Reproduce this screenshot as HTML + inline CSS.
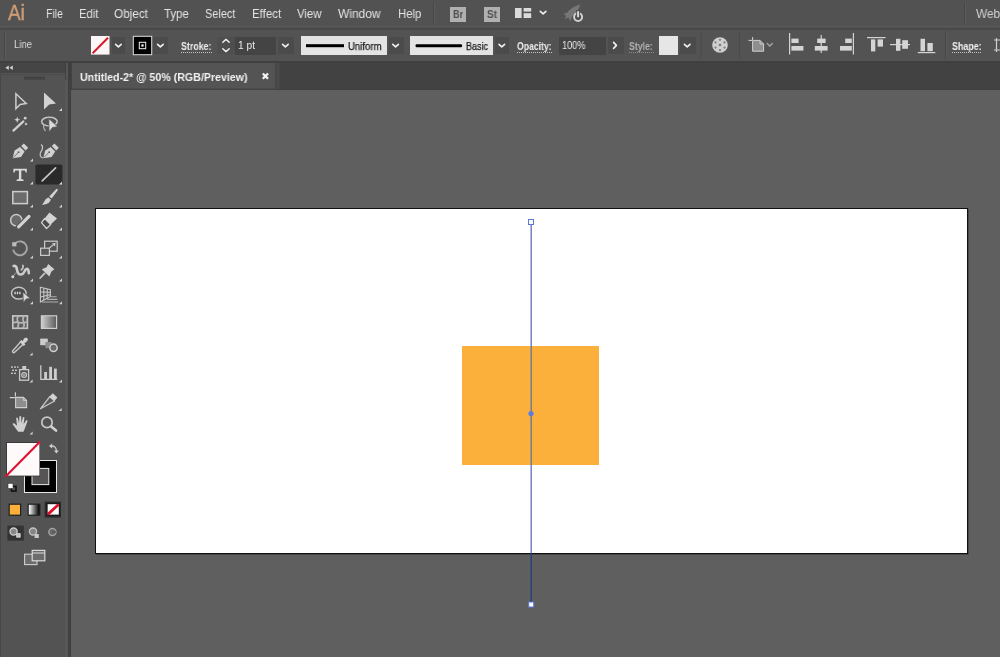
<!DOCTYPE html>
<html>
<head>
<meta charset="utf-8">
<title>Untitled-2* @ 50% (RGB/Preview)</title>
<style>
html,body{margin:0;padding:0;}
body{width:1000px;height:657px;overflow:hidden;background:#5f5f5f;font-family:"Liberation Sans",sans-serif;font-size:12px;color:#e6e6e6;position:relative;}
.abs{position:absolute;}
.tx{position:absolute;white-space:nowrap;transform-origin:0 0;will-change:transform;}
#menubar{left:0;top:0;width:1000px;height:28px;background:#525252;}
#sep1{left:0;top:28px;width:1000px;height:2px;background:#494949;}
#sep1b{left:0;top:26px;width:1000px;height:1px;background:#585858;}
#ctrlbar{left:0;top:30px;width:1000px;height:31px;background:#535353;}
#sep2{left:0;top:61px;width:1000px;height:2px;background:#404040;}
#tabbar{left:71px;top:63px;width:929px;height:27px;background:#424242;}
#tab{left:72px;top:63px;width:203px;height:26px;background:#545454;}
#toolhead{left:0;top:63px;width:65px;height:10px;background:#454545;}
#toolbar{left:0;top:73px;width:68px;height:584px;background:#535353;}
#toolborder{left:68px;top:63px;width:3px;height:594px;background:#3e3e3e;}
#toolborder4{left:65px;top:80px;width:3px;height:577px;background:#585858;}
#toolborder5{left:69px;top:80px;width:1px;height:577px;background:#454545;}
#toolborder2{left:65px;top:63px;width:1px;height:17px;background:#404040;}
#toolborder3{left:66px;top:63px;width:2px;height:17px;background:#555555;}
#canvas{left:71px;top:90px;width:929px;height:567px;background:#5f5f5f;}
.field{top:37px;height:18px;background:#444444;}
.lightbox{top:36px;height:19px;background:#e4e4e4;}
.chev{top:37px;height:17px;background:#4b4b4b;}
svg{position:absolute;left:0;top:0;}
</style>
</head>
<body>
<div id="menubar" class="abs"></div>
<div id="sep1" class="abs"></div>
<div id="sep1b" class="abs"></div>
<div id="ctrlbar" class="abs"></div>
<div id="sep2" class="abs"></div>
<div id="tabbar" class="abs"></div>
<div id="tab" class="abs"></div>
<div id="toolhead" class="abs"></div>
<div id="toolbar" class="abs"></div>
<div id="toolborder" class="abs"></div>
<div id="toolborder2" class="abs"></div>
<div id="toolborder3" class="abs"></div>
<div id="toolborder4" class="abs"></div>
<div id="toolborder5" class="abs"></div>
<div id="canvas" class="abs"></div>
<!-- menu icon boxes -->
<div class="abs" style="left:449.5px;top:6.5px;width:16px;height:15.5px;background:#b0b0b0;"></div>
<div class="abs" style="left:483.6px;top:6.5px;width:16.3px;height:15.5px;background:#b0b0b0;"></div>
<!-- control bar boxes -->
<div class="abs chev" style="left:112px;width:13px;"></div>
<div class="abs chev" style="left:153px;width:15px;"></div>
<div class="abs chev" style="left:217px;width:18px;background:#4e4e4e;"></div>
<div class="abs field" style="left:235px;width:41px;"></div>
<div class="abs chev" style="left:278px;width:16px;"></div>
<div class="abs lightbox" style="left:301px;width:86px;"></div>
<div class="abs chev" style="left:389px;width:15px;"></div>
<div class="abs lightbox" style="left:410px;width:83px;"></div>
<div class="abs chev" style="left:495px;width:14px;"></div>
<div class="abs field" style="left:559px;width:47px;"></div>
<div class="abs chev" style="left:608px;width:16px;"></div>
<div class="abs lightbox" style="left:659px;width:19px;background:#e6e6e6;"></div>
<div class="abs chev" style="left:680px;width:16px;"></div>
<!-- artboard -->
<div class="abs" style="left:96px;top:209px;width:873px;height:346px;background:#474747;"></div>
<div class="abs" style="left:95px;top:208px;width:871px;height:344px;background:#ffffff;border:1px solid #101010;"></div>
<div class="abs" style="left:462px;top:346px;width:137px;height:119px;background:#fbb03b;"></div>

<!-- TEXT -->
<div class="tx" style="left:7.6px;top:-0.25px;font-size:21.5px;line-height:26px;font-weight:normal;color:#d19f78;transform:scaleX(0.8837);-webkit-text-stroke:0.35px #d19f78;">Ai</div>
<div class="tx" style="left:45.6px;top:6.50px;font-size:12.4px;line-height:15px;font-weight:normal;color:#e4e4e4;transform:scaleX(0.8513);">File</div>
<div class="tx" style="left:78.8px;top:6.50px;font-size:12.4px;line-height:15px;font-weight:normal;color:#e4e4e4;transform:scaleX(0.9083);">Edit</div>
<div class="tx" style="left:114.2px;top:6.50px;font-size:12.4px;line-height:15px;font-weight:normal;color:#e4e4e4;transform:scaleX(0.9494);">Object</div>
<div class="tx" style="left:163.8px;top:6.50px;font-size:12.4px;line-height:15px;font-weight:normal;color:#e4e4e4;transform:scaleX(0.9228);">Type</div>
<div class="tx" style="left:205.4px;top:6.50px;font-size:12.4px;line-height:15px;font-weight:normal;color:#e4e4e4;transform:scaleX(0.8828);">Select</div>
<div class="tx" style="left:252.2px;top:6.50px;font-size:12.4px;line-height:15px;font-weight:normal;color:#e4e4e4;transform:scaleX(0.9279);">Effect</div>
<div class="tx" style="left:296.8px;top:6.50px;font-size:12.4px;line-height:15px;font-weight:normal;color:#e4e4e4;transform:scaleX(0.9159);">View</div>
<div class="tx" style="left:338.2px;top:6.50px;font-size:12.4px;line-height:15px;font-weight:normal;color:#e4e4e4;transform:scaleX(0.9665);">Window</div>
<div class="tx" style="left:397.8px;top:6.50px;font-size:12.4px;line-height:15px;font-weight:normal;color:#e4e4e4;transform:scaleX(0.9182);">Help</div>
<div class="tx" style="left:976.4px;top:6.50px;font-size:12.4px;line-height:15px;font-weight:normal;color:#d2d2d2;transform:scaleX(0.9578);">Web</div>
<div class="tx" style="left:452.6px;top:8.06px;font-size:10.5px;line-height:13px;font-weight:bold;color:#505050;transform:scaleX(0.8739);">Br</div>
<div class="tx" style="left:486.8px;top:8.06px;font-size:10.5px;line-height:13px;font-weight:bold;color:#505050;transform:scaleX(0.9524);">St</div>
<div class="tx" style="left:14.0px;top:38.67px;font-size:10.2px;line-height:12px;font-weight:normal;color:#dadada;transform:scaleX(0.9343);">Line</div>
<div class="tx" style="left:181.0px;top:40.77px;font-size:10.2px;line-height:12px;font-weight:bold;color:#eeeeee;transform:scaleX(0.8659);">Stroke:</div>
<div class="tx" style="left:238.2px;top:39.87px;font-size:10.2px;line-height:12px;font-weight:normal;color:#eaeaea;transform:scaleX(0.9765);">1 pt</div>
<div class="tx" style="left:348.4px;top:40.67px;font-size:10.2px;line-height:12px;font-weight:normal;color:#1c1c1c;transform:scaleX(0.9419);-webkit-text-stroke:0.25px #1c1c1c;">Uniform</div>
<div class="tx" style="left:466.4px;top:40.67px;font-size:10.2px;line-height:12px;font-weight:normal;color:#1c1c1c;transform:scaleX(0.8828);-webkit-text-stroke:0.25px #1c1c1c;">Basic</div>
<div class="tx" style="left:517.4px;top:40.77px;font-size:10.2px;line-height:12px;font-weight:bold;color:#eeeeee;transform:scaleX(0.8488);">Opacity:</div>
<div class="tx" style="left:562.2px;top:39.87px;font-size:10.2px;line-height:12px;font-weight:normal;color:#eaeaea;transform:scaleX(0.8978);">100%</div>
<div class="tx" style="left:629.4px;top:40.77px;font-size:10.2px;line-height:12px;font-weight:bold;color:#b2b2b2;transform:scaleX(0.8577);">Style:</div>
<div class="tx" style="left:952.0px;top:40.77px;font-size:10.2px;line-height:12px;font-weight:bold;color:#eeeeee;transform:scaleX(0.8714);">Shape:</div>
<div class="tx" style="left:80.0px;top:70.62px;font-size:11.2px;line-height:13px;font-weight:bold;color:#f2f2f2;transform:scaleX(0.9508);">Untitled-2* @ 50% (RGB/Preview)</div>
<svg width="1000" height="657" viewBox="0 0 1000 657">
<!-- ===== menu bar icons ===== -->
<g id="menuicons">
  <rect x="433" y="3" width="1" height="21" fill="#474747"/>
  <rect x="434" y="3" width="1" height="21" fill="#5b5b5b"/>
  <rect x="964" y="3" width="1" height="21" fill="#474747"/>
  <rect x="965" y="3" width="1" height="21" fill="#5b5b5b"/>
  <!-- workspace layout icon -->
  <rect x="515" y="8" width="6.6" height="10" fill="#dadada"/>
  <rect x="523.6" y="8" width="7.6" height="3.6" fill="#dadada"/>
  <rect x="523.6" y="13.2" width="7.6" height="4.8" fill="#dadada"/>
  <path d="M540.3 11.4 L543.1 13.9 L545.9 11.4" fill="none" stroke="#f0f0f0" stroke-width="1.6" stroke-linecap="round" stroke-linejoin="round"/>
  <!-- rocket / gpu icon -->
  <path d="M581 4.5 C576 5 570 8.5 567 13 L563.5 13.5 L566 16 L565 19 L568.5 17.5 L570.5 21 L572 16.5 C576 13.5 579.4 9 580 4.8 Z" fill="#767676"/>
  <circle cx="578.1" cy="17.1" r="4" fill="#4e4e4e" stroke="#d4d4d4" stroke-width="1.9"/>
  <rect x="576.2" y="10" width="3.8" height="5" fill="#4e4e4e"/>
  <path d="M578.1 11.2 V17.2" stroke="#d8d8d8" stroke-width="2" stroke-linecap="butt"/>
</g>
<!-- ===== control bar icons ===== -->
<g id="ctrlicons">
  <!-- left grip -->
  <rect x="4" y="31" width="1" height="27" fill="#454545"/>
  <rect x="5" y="31" width="1" height="27" fill="#5e5e5e"/>
  <!-- fill swatch (none) -->
  <rect x="91" y="36" width="18.5" height="18.6" fill="#fdf6f6"/>
  <path d="M108 37.8 L92.6 53.2" stroke="#d41c2c" stroke-width="2" stroke-linecap="butt"/>
  <!-- stroke swatch -->
  <rect x="133.3" y="36.3" width="18.4" height="18.4" fill="#000" stroke="#dcdcdc" stroke-width="1"/>
  <rect x="139.3" y="42.3" width="6.4" height="6.4" fill="none" stroke="#f0f0f0" stroke-width="1"/>
  <rect x="141.4" y="44.4" width="2.2" height="2.2" fill="#ffffff"/>
  <!-- chevrons -->
  <g fill="none" stroke="#f2f2f2" stroke-width="1.6" stroke-linecap="round" stroke-linejoin="round">
    <path d="M115.6 44.4 L118.4 46.9 L121.2 44.4"/>
    <path d="M157.6 44.4 L160.4 46.9 L163.2 44.4"/>
    <path d="M282.6 44.4 L285.4 46.9 L288.2 44.4"/>
    <path d="M392.8 44.4 L395.6 46.9 L398.4 44.4"/>
    <path d="M499.0 44.4 L501.8 46.9 L504.6 44.4"/>
    <path d="M684.4 44.4 L687.2 46.9 L690.0 44.4"/>
    <path d="M613.6 42.4 L616.4 45.4 L613.6 48.4"/>
    <!-- spinner -->
    <path d="M222.8 42.2 L226 39.4 L229.2 42.2" stroke-width="1.4"/>
    <path d="M222.8 48.8 L226 51.6 L229.2 48.8" stroke-width="1.4"/>
  </g>
  <!-- dotted underlines -->
  <g stroke="#c4c4c4" stroke-width="1" stroke-dasharray="1 1">
    <path d="M181 52.5 H212"/>
    <path d="M517 52.5 H552"/>
    <path d="M952 52.5 H982"/>
  </g>
  <path d="M629 52.5 H654" stroke="#8c8c8c" stroke-width="1" stroke-dasharray="1 1"/>
  <!-- Uniform / Basic lines -->
  <rect x="306" y="44.2" width="38" height="3" fill="#000"/>
  <rect x="415.6" y="44.2" width="46.4" height="3" rx="1" fill="#000"/>
  <!-- separators -->
  <rect x="700.5" y="32" width="1" height="26" fill="#4a4a4a"/>
  <rect x="739" y="32" width="1" height="26" fill="#4a4a4a"/>
  <rect x="945" y="31" width="1" height="28" fill="#464646"/>
  <rect x="946" y="31" width="1" height="28" fill="#5a5a5a"/>
  <!-- recolor wheel -->
  <circle cx="720" cy="45" r="7.8" fill="#cfcfcf"/>
  <g fill="#7c7c7c">
    <circle cx="720" cy="45" r="1.3"/>
    <circle cx="720" cy="39.8" r="1.1"/>
    <circle cx="724.5" cy="42.4" r="1.1"/>
    <circle cx="724.5" cy="47.6" r="1.1"/>
    <circle cx="720" cy="50.2" r="1.1"/>
    <circle cx="715.5" cy="47.6" r="1.1"/>
    <circle cx="715.5" cy="42.4" r="1.1"/>
  </g>
  <!-- document setup -->
  <path d="M752.6 40.4 H760 L763.6 44 V51.2 H752.6 Z" fill="#8e8e8e" stroke="#d0d0d0" stroke-width="1"/>
  <path d="M760 40.4 V44 H763.6" fill="none" stroke="#d0d0d0" stroke-width="0.9"/>
  <path d="M752.6 37 V40 M748.5 40.4 H752" stroke="#d0d0d0" stroke-width="1"/>
  <path d="M767.2 43.6 L769.8 46 L772.4 43.6" fill="none" stroke="#a6a6a6" stroke-width="1.4" stroke-linecap="round"/>
  <!-- align icons -->
  <g fill="#d4d4d4">
    <rect x="789" y="33" width="1.2" height="21.5"/>
    <rect x="791.4" y="38.6" width="7.2" height="4.4"/>
    <rect x="791.4" y="46" width="12" height="4.6"/>
    <rect x="820.6" y="35" width="1.2" height="18"/>
    <rect x="817.2" y="38.6" width="8.4" height="4.4"/>
    <rect x="814.8" y="46" width="12.8" height="4.6"/>
    <rect x="852.8" y="33" width="1.2" height="21.5"/>
    <rect x="845.2" y="38.6" width="6.6" height="4.4"/>
    <rect x="840" y="46" width="11.8" height="4.6"/>
    <rect x="867" y="37" width="18.5" height="1.2"/>
    <rect x="871" y="39.4" width="4.3" height="12"/>
    <rect x="877.6" y="39.4" width="5.4" height="7.2"/>
    <rect x="890" y="44" width="20" height="1.2"/>
    <rect x="896" y="38.8" width="4.4" height="12"/>
    <rect x="902.2" y="40.2" width="5.8" height="8.6"/>
    <rect x="917.8" y="52" width="17.5" height="1.2"/>
    <rect x="920.5" y="38.8" width="4.5" height="12.4"/>
    <rect x="927.4" y="43" width="5.4" height="8.2"/>
  </g>
  <!-- shape icon at far right (cut) -->
  <path d="M996.5 38 V52 M994 40 H1000 M994 50 H1000" stroke="#cfcfcf" stroke-width="1.2" fill="none"/>
</g>
<!-- ===== tab close ===== -->
<path d="M262.8 73.4 L268 78.8 M268 73.4 L262.8 78.8" stroke="#f6f6f6" stroke-width="2.2" stroke-linecap="butt"/>
<!-- tab bar bottom line -->
<rect x="71" y="89" width="929" height="1" fill="#3f3f3f"/>
<rect x="275" y="63" width="2" height="26" fill="#474747"/>
<rect x="277" y="63" width="2.5" height="26" fill="#4b4b4b"/>
<rect x="72" y="88.4" width="203" height="1" fill="#4a4a4a"/>
<!-- ===== canvas line ===== -->
<g id="line">
  <rect x="530.5" y="225" width="1.4" height="121" fill="#6b7cbf"/>
  <rect x="530.5" y="346" width="1.4" height="119" fill="#68799c"/>
  <rect x="530.5" y="465" width="1.4" height="88" fill="#6b7cbf"/>
  <rect x="530.5" y="553" width="1.4" height="49.5" fill="#293e7c"/>
  <rect x="528.5" y="219.5" width="5" height="5" fill="#ffffff" stroke="#5a78d8" stroke-width="1"/>
  <rect x="528.7" y="602" width="5" height="5" fill="#ffffff" stroke="#5a78d8" stroke-width="1"/>
  <circle cx="531" cy="413.6" r="2.6" fill="#5a7bea"/>
</g>
<!-- ===== toolbar ===== -->
<g id="toolhead-icons">
  <path d="M8.8 65.5 L5.3 67.8 L8.8 70.1 Z M12.8 65.5 L9.4 67.8 L12.8 70.1 Z" fill="#d0d0d0"/>
  <rect x="0" y="63" width="1" height="594" fill="#474747"/>
  <rect x="24" y="76.6" width="21" height="3" fill="#434343"/>
  <rect x="0" y="74" width="66" height="1" fill="#4c4c4c"/>
</g>
<!-- flyout triangles -->
<g fill="#d2d2d2">
  <path d="M62 108 V111 H59 Z"/>
  <path d="M33 158.6 V161.6 H30 Z"/>
  <path d="M33 181.4 V184.4 H30 Z"/>
  <path d="M62 181.4 V184.4 H59 Z"/>
  <path d="M33 204.6 V207.6 H30 Z"/>
  <path d="M62 204.6 V207.6 H59 Z"/>
  <path d="M33 227.6 V230.6 H30 Z"/>
  <path d="M62 227.6 V230.6 H59 Z"/>
  <path d="M33 255.4 V258.4 H30 Z"/>
  <path d="M62 255.4 V258.4 H59 Z"/>
  <path d="M33 278.4 V281.4 H30 Z"/>
  <path d="M62 278.4 V281.4 H59 Z"/>
  <path d="M33 301.2 V304.2 H30 Z"/>
  <path d="M62 301.2 V304.2 H59 Z"/>
  <path d="M32.6 352.4 V355.4 H29.6 Z"/>
  <path d="M32.6 379.4 V382.4 H29.6 Z"/>
  <path d="M62 379.4 V382.4 H59 Z"/>
  <path d="M61.6 408 V411 H58.6 Z"/>
  <path d="M32.6 431.4 V434.4 H29.6 Z"/>
</g>
<!-- row 1: selection / direct selection -->
<path d="M15.9 93.8 L26.2 103.5 L20.2 104.4 L15.9 108.6 Z" fill="none" stroke="#cdcdcd" stroke-width="1.5" stroke-linejoin="miter"/>
<path d="M44 92.4 L56 103.6 L49.2 104.4 L44 109.4 Z" fill="#d2d2d2"/>
<!-- row 2: magic wand / lasso -->
<path d="M13.4 130.6 L23.4 121.4" stroke="#d0d0d0" stroke-width="2.2" stroke-linecap="round"/>
<path d="M17.2 116.6 L18 119 L20.4 119.8 L18 120.6 L17.2 123 L16.4 120.6 L14 119.8 L16.4 119 Z" fill="#d4d4d4"/>
<circle cx="25.2" cy="118.2" r="1.4" fill="#cfcfcf"/>
<circle cx="26" cy="124" r="1.3" fill="#bdbdbd"/>
<ellipse cx="49.4" cy="121.6" rx="7.8" ry="4.4" fill="none" stroke="#c4c4c4" stroke-width="1.5"/>
<path d="M43.6 124.6 C43.2 127 44 129.4 45.4 131" fill="none" stroke="#b8b8b8" stroke-width="1.2"/>
<path d="M48.8 118.4 L57.6 126.8 L52.6 127.4 L49 132 Z" fill="#dadada" stroke="#535353" stroke-width="0.8"/>
<!-- row 3: pen / curvature -->
<g id="pen">
  <path d="M12.6 158.2 L14.6 150.6 L20 147 L24.6 151.6 L21 157 Z" fill="#d2d2d2"/>
  <path d="M13.4 157.4 L18 152.8" stroke="#5a5a5a" stroke-width="0.8"/>
  <circle cx="18.6" cy="152.2" r="0.9" fill="#5a5a5a"/>
  <path d="M21.2 146 L23.8 143.4 L28.2 147.8 L25.6 150.4 Z" fill="#d2d2d2"/>
</g>
<g id="curv" transform="translate(30.6 0)">
  <path d="M12.6 158.2 L14.6 150.6 L20 147 L24.6 151.6 L21 157 Z" fill="#d2d2d2"/>
  <path d="M13.4 157.4 L18 152.8" stroke="#5a5a5a" stroke-width="0.8"/>
  <circle cx="18.6" cy="152.2" r="0.9" fill="#5a5a5a"/>
  <path d="M21.2 146 L23.8 143.4 L28.2 147.8 L25.6 150.4 Z" fill="#d2d2d2"/>
</g>
<path d="M41 144.4 C43.6 146.4 42.6 149.2 41 151.6 C39.4 154 39.8 157 43 158" fill="none" stroke="#c8c8c8" stroke-width="1.2"/>
<!-- row 4: type / line (selected) -->
<path d="M13.4 168.8 H26.8 V172.6 H25.6 L25 170.4 H21.3 V179 L23.6 179.8 V181 H16.6 V179.8 L18.9 179 V170.4 H15.2 L14.6 172.6 H13.4 Z" fill="#dadada"/>
<rect x="35.4" y="164.6" width="27" height="20" rx="1.6" fill="#2a2a2a"/>
<path d="M42.2 180.8 L55.6 167.8" stroke="#c6c6c6" stroke-width="1.7" stroke-linecap="round"/>
<path d="M62 181.4 V184.4 H59 Z" fill="#d8d8d8"/>
<!-- row 5: rectangle / paintbrush -->
<rect x="12.8" y="191.6" width="14.6" height="12" fill="#6c6c6c" stroke="#cdcdcd" stroke-width="1.5"/>
<path d="M56.6 188.8 C57.6 189 58 189.8 57.6 190.6 L51.6 198.6 L49.2 196.6 Z" fill="#d2d2d2"/>
<path d="M48.4 197.4 L50.8 199.6 C50.2 203 46 205.2 41.6 204.6 C44.4 203.2 44.2 199 48.4 197.4 Z" fill="#d2d2d2"/>
<!-- row 6: shaper / eraser -->
<circle cx="16.3" cy="220.2" r="5.7" fill="#6a6a6a" stroke="#cacaca" stroke-width="1.5"/>
<path d="M18 227.4 L29 216.4" stroke="#535353" stroke-width="5.2" stroke-linecap="round"/>
<path d="M18.6 226.8 L29 216.4" stroke="#d2d2d2" stroke-width="3.2" stroke-linecap="round"/>
<path d="M49.4 212.6 L57 218.5 L50.7 224.5 L44.7 218.5 Z" fill="#d4d4d4"/>
<path d="M44.7 218.5 L50.7 224.5 L46.5 228.5 L41.5 222.6 Z" fill="#4a4a4a" stroke="#d0d0d0" stroke-width="1.3" stroke-linejoin="round"/>
<!-- row 7: rotate / scale -->
<path d="M15.6 243 A6.9 6.9 0 1 1 13.2 249.6" fill="none" stroke="#a6a6a6" stroke-width="1.9"/>
<path d="M12.2 242.2 L16.4 242.2 L16.4 246.4 L12.2 246.4 Z" fill="#bcbcbc"/>
<rect x="44.6" y="241.2" width="12.6" height="10" fill="none" stroke="#cacaca" stroke-width="1.2"/>
<rect x="40.6" y="248.2" width="8.8" height="7.2" fill="#5a5a5a" stroke="#cacaca" stroke-width="1.2"/>
<path d="M48.6 248.8 L54.4 243.8" stroke="#c4c4c4" stroke-width="1.2"/>
<path d="M55.6 242.8 L52 243.4 L55 246.4 Z" fill="#c8c8c8"/>
<!-- row 8: width / puppet pin -->
<path d="M13.6 266 C17.2 265 16.6 270 17.8 272.6 C19.2 275.4 22.8 275 24.2 272 C25.4 269.4 27.2 267.8 28.2 269.8 C28.8 271 28.8 272 28.8 273.2" fill="none" stroke="#cccccc" stroke-width="2.6" stroke-linecap="round" stroke-linejoin="round"/>
<path d="M22.8 265.4 C23.6 267.2 22.6 268.8 21.4 269.8" fill="none" stroke="#bcbcbc" stroke-width="1.8" stroke-linecap="round"/>
<path d="M12.8 276.6 L15.8 272.6" stroke="#a8a8a8" stroke-width="0.9"/>
<circle cx="12.8" cy="276.8" r="1.5" fill="#d4d4d4"/>
<path d="M48.2 264 L54.4 269.2 L51.4 271.6 L49.4 276.4 L41.8 269.2 L46.6 267.2 Z" fill="#d2d2d2"/>
<path d="M44.6 273.4 L40.2 278" stroke="#c4c4c4" stroke-width="1.8" stroke-linecap="round"/>
<!-- row 9: shape builder / perspective grid -->
<ellipse cx="18.8" cy="293.2" rx="7.3" ry="5.9" fill="#4a4a4a" stroke="#c2c2c2" stroke-width="1.5"/>
<path d="M14.4 293 H21.6" stroke="#d4d4d4" stroke-width="2.4" stroke-dasharray="1.4 1"/>
<path d="M22.9 292 L30.4 298.6 L26.2 299 L23.3 303 Z" fill="#d8d8d8" stroke="#535353" stroke-width="0.8"/>
<g fill="none" stroke="#c6c6c6" stroke-width="1.1">
  <path d="M40.4 287.2 L50.4 289.6 V296.4 L40.4 302 Z"/>
  <path d="M43.8 288 V300 M47.2 288.8 V298.2 M40.4 292 L50.4 292.4 M40.4 297 L50.4 294.6"/>
  <path d="M50.4 296.8 H56.6 M47 299.4 H57.4 M42 302 H58.2" stroke="#b0b0b0"/>
</g>
<!-- row 10: mesh / gradient -->
<defs>
  <linearGradient id="gr1" x1="0" y1="0" x2="1" y2="0"><stop offset="0" stop-color="#cfcfcf"/><stop offset="1" stop-color="#5a5a5a"/></linearGradient>
  <linearGradient id="gr2" x1="0" y1="0" x2="1" y2="0"><stop offset="0" stop-color="#ffffff"/><stop offset="1" stop-color="#000000"/></linearGradient>
</defs>
<rect x="12.8" y="315.9" width="14.6" height="12.4" fill="#5e5e5e" stroke="#c4c4c4" stroke-width="1.7"/>
<path d="M18.4 316 C14.6 320 21.4 324 17 328.2 M24 316 C20.4 320 27 324 22.8 328.2 M12.8 323.4 C16.6 319.6 23 325.6 27.4 321.4" fill="none" stroke="#b4b4b4" stroke-width="1.8"/>
<rect x="41.4" y="315.8" width="15.2" height="12.6" fill="url(#gr1)" stroke="#cdcdcd" stroke-width="1.2"/>
<!-- row 11: eyedropper / blend -->
<path d="M23.4 344 L14.4 352.4 C13.4 353.2 12 351.8 12.8 350.8 L20.8 341.6" fill="none" stroke="#cacaca" stroke-width="1.4" stroke-linejoin="round"/>
<path d="M19.6 341.8 L21.4 340 L22.6 341.2 L24 338.6 C25 337.2 27.4 337.4 27.8 339 C28.2 340.4 27 341.4 25.4 342.4 L24.4 343.2 L25.4 344.4 L23.8 346 Z" fill="#d2d2d2"/>
<rect x="40.2" y="338.6" width="7.6" height="6.6" fill="#cccccc"/>
<rect x="45.4" y="342" width="6.2" height="6.2" fill="#8c8c8c"/>
<circle cx="53.5" cy="347.8" r="3.7" fill="#6a6a6a" stroke="#d0d0d0" stroke-width="1.5"/>
<!-- row 12: symbol sprayer / graph -->
<rect x="19.6" y="369.6" width="9" height="10.6" fill="none" stroke="#cacaca" stroke-width="1.3"/>
<rect x="22.2" y="366" width="4" height="3" fill="#cacaca"/>
<circle cx="24.1" cy="375" r="2.4" fill="none" stroke="#c8c8c8" stroke-width="1.2"/>
<path d="M23.4 373.8 L25.6 375 L23.4 376.2 Z" fill="#cfcfcf"/>
<g fill="#c4c4c4">
  <rect x="11" y="366.4" width="2" height="1.4"/><rect x="14" y="366.4" width="2" height="1.4"/><rect x="17" y="366.4" width="1.6" height="1.4"/>
  <rect x="12" y="369.6" width="2" height="1.4"/><rect x="15" y="369.6" width="2" height="1.4"/>
  <rect x="11" y="372.6" width="2" height="1.4"/><rect x="14" y="372.6" width="2" height="1.4"/>
</g>
<path d="M40.8 365.2 V379.4 H57.4" fill="none" stroke="#cdcdcd" stroke-width="1.3"/>
<g fill="#cdcdcd">
  <rect x="44.2" y="372" width="2.8" height="7"/>
  <rect x="49.2" y="366.8" width="2.8" height="12.2"/>
  <rect x="54" y="368.6" width="2.8" height="10.4"/>
</g>
<!-- row 13: artboard / slice -->
<path d="M15.6 397.4 H23.4 L26.6 400.6 V407.6 H15.6 Z" fill="#8e8e8e" stroke="#cfcfcf" stroke-width="1.1"/>
<path d="M23.4 397.4 V400.6 H26.6" fill="none" stroke="#cfcfcf" stroke-width="0.9"/>
<path d="M15.4 392.2 V396.6 M9.8 397.6 H14.8" stroke="#d4d4d4" stroke-width="1.1"/>
<path d="M40.4 408.8 L49.8 396.6 L54.6 401 Z" fill="#5a5a5a" stroke="#c8c8c8" stroke-width="1.3" stroke-linejoin="round"/>
<path d="M49.6 396.6 L52.8 393.2 L57.4 397.4 L54.4 401 Z" fill="#d2d2d2"/>
<!-- row 14: hand / zoom -->
<path d="M18.2 431.8 C16.6 430 14.6 426.6 12.8 424.6 C12.2 423.6 13.4 422.8 14.4 423.4 L17 425.8 L16.2 418.4 C16.2 417.2 17.8 417.2 18 418.4 L19 423.4 L19.4 416.8 C19.6 415.6 21.2 415.8 21.2 417 L21.4 423.2 L22.8 417.6 C23.2 416.6 24.6 417 24.4 418.2 L23.6 424.2 L26 420.6 C26.6 419.8 27.8 420.4 27.4 421.4 L25 428 C24.6 429.6 24 430.8 23.4 431.8 Z" fill="#d0d0d0"/>
<circle cx="47" cy="422.4" r="5.2" fill="none" stroke="#c8c8c8" stroke-width="1.7"/>
<path d="M51.2 426.6 L56 430.6" stroke="#d0d0d0" stroke-width="2.6" stroke-linecap="round"/>
<!-- ===== fill / stroke ===== -->
<g id="fillstroke">
  <!-- stroke swatch (behind) -->
  <rect x="24.5" y="460.5" width="32" height="32" fill="#000" stroke="#e6e6e6" stroke-width="1"/>
  <rect x="32" y="468.4" width="16.8" height="16.2" fill="#555555" stroke="#e6e6e6" stroke-width="1"/>
  <!-- fill swatch (front) -->
  <rect x="6" y="442" width="34" height="34.4" fill="#3a3a3a"/>
  <rect x="7" y="443" width="32.4" height="32.6" fill="#fffafa"/>
  <path d="M40.2 441.4 L5.4 476.8" stroke="#e01234" stroke-width="2.1"/>
  <!-- swap arrows -->
  <path d="M51.4 446 C54.6 446 56.4 448 56.4 451" fill="none" stroke="#c4c4c4" stroke-width="1.3"/>
  <path d="M49 446 L52.2 443.6 V448.4 Z" fill="#cfcfcf"/>
  <path d="M56.4 453.6 L54 450.4 H58.8 Z" fill="#cfcfcf"/>
  <!-- default fill/stroke -->
  <rect x="11.4" y="486.4" width="4.6" height="4.6" fill="none" stroke="#111" stroke-width="1.6"/>
  <rect x="8" y="483.4" width="5" height="5" fill="#ffffff" stroke="#3a3a3a" stroke-width="0.6"/>
</g>
<!-- color / gradient / none -->
<g id="cgn">
  <rect x="8.6" y="503.6" width="12.6" height="12.2" fill="#202020"/>
  <rect x="9.8" y="504.8" width="10.2" height="9.8" fill="#fbb03b"/>
  <rect x="27.6" y="503.6" width="12.8" height="12.2" fill="#202020"/>
  <rect x="28.8" y="504.8" width="10.4" height="9.8" fill="url(#gr2)"/>
  <rect x="44.6" y="501.6" width="16.4" height="16" fill="#2e2e2e"/>
  <rect x="46.6" y="503.2" width="13" height="12.4" fill="#1c1c1c"/>
  <rect x="47.6" y="504.2" width="11.2" height="10.4" fill="#ffffff"/>
  <path d="M58.8 504.2 L47.6 514.6" stroke="#e0102c" stroke-width="2.8"/>
  <rect x="46.6" y="503.2" width="13" height="12.4" fill="none" stroke="#1c1c1c" stroke-width="1"/>
</g>
<!-- draw modes -->
<g id="drawmodes">
  <rect x="7.4" y="525.6" width="16.4" height="15" fill="#333333"/>
  <rect x="16.4" y="533.4" width="4" height="4" fill="#bdbdbd"/>
  <circle cx="13.6" cy="531.6" r="3.6" fill="#8a8a8a" stroke="#cccccc" stroke-width="1.3"/>
  <rect x="16.8" y="533.8" width="3.2" height="3.2" fill="none" stroke="#d4d4d4" stroke-width="1"/>
  <circle cx="33" cy="531.6" r="3.6" fill="#858585" stroke="#c4c4c4" stroke-width="1.3"/>
  <rect x="34.6" y="534" width="4.2" height="4" fill="#c8c8c8"/>
  <circle cx="52.4" cy="532" r="3.6" fill="#6a6a6a" stroke="#a8a8a8" stroke-width="1.3"/>
  <path d="M52.4 532 L56 532" stroke="#535353" stroke-width="1.4"/>
</g>
<!-- screen mode -->
<g id="screenmode">
  <rect x="24.6" y="554.2" width="12.4" height="10.4" fill="#6c6c6c" stroke="#cfcfcf" stroke-width="1.1"/>
  <rect x="32.2" y="550.4" width="12.6" height="10.4" fill="#6c6c6c" stroke="#dadada" stroke-width="1.2"/>
  <path d="M32.2 553 H44.8" stroke="#dadada" stroke-width="1"/>
</g>
</svg>

</body>
</html>
